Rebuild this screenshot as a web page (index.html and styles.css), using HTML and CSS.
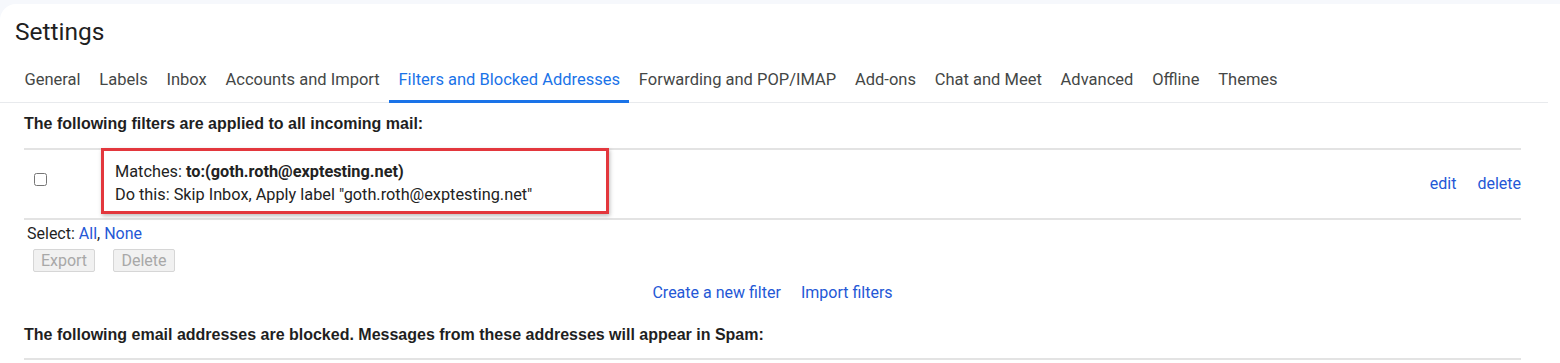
FILE: index.html
```html
<!DOCTYPE html>
<html lang="en">
<head>
  <title>Settings - Filters and Blocked Addresses</title>
  <link rel="stylesheet" href="styles.css">
</head>
<body>

  <div class="card">
    <h1 class="title">Settings</h1>

    <nav class="tabs">
      <a class="tab">General</a>
      <a class="tab">Labels</a>
      <a class="tab">Inbox</a>
      <a class="tab">Accounts and Import</a>
      <a class="tab active">Filters and Blocked Addresses</a>
      <a class="tab">Forwarding and POP/IMAP</a>
      <a class="tab">Add-ons</a>
      <a class="tab">Chat and Meet</a>
      <a class="tab">Advanced</a>
      <a class="tab">Offline</a>
      <a class="tab">Themes</a>
    </nav>

    <div class="content">
      <div class="section-head">The following filters are applied to all incoming mail:</div>

      <table class="filters">
        <tr>
          <td class="check-cell"><input type="checkbox"></td>
          <td class="desc-cell">
            <div class="desc">
              <div>Matches: <b>to:(goth.roth@exptesting.net)</b></div>
              <div>Do this: Skip Inbox, Apply label "goth.roth@exptesting.net"</div>
              <!-- highlight box from the screenshot -->
              <div class="highlight"></div>
            </div>
          </td>
          <td class="actions-cell">
            <a class="link">edit</a>
            <a class="link">delete</a>
          </td>
        </tr>
      </table>

      <div class="select">Select: <a class="link">All</a>, <a class="link">None</a></div>

      <div class="bulk">
        <button disabled>Export</button>
        <button disabled>Delete</button>
      </div>

      <div class="create">
        <a class="link">Create a new filter</a>
        <a class="link">Import filters</a>
      </div>

      <div class="section-head blocked">The following email addresses are blocked. Messages from these addresses will appear in Spam:</div>
      <div class="rule"></div>
    </div>
  </div>

</body>
</html>
```

FILE: styles.css
```css
:root {
  --bg: #f6f8fc;
  --text: #1f1f1f;
  --tab-text: #444746;
  --active: #1a73e8;
  --link: #2458d6;
  --line: #e3e3e3;
  --mark: #e3373d;
}

* {
  box-sizing: border-box;
}

body {
  margin: 0;
  background: var(--bg);
  font-family: Roboto, "Liberation Sans", sans-serif;
  color: var(--text);
  overflow: hidden;
}

.card {
  margin-top: 4px;
  width: 1576px;
  height: 359px;
  background: white;
  border-radius: 16px 16px 0 0;
  padding-top: 14px;
}

.title {
  margin: 0;
  padding-left: 15px;
  font-size: 24.5px;
  line-height: 28px;
  font-weight: 400;
}

.tabs {
  display: flex;
  margin-top: 11px;
  margin-right: 28px;
  padding-left: 15px;
  border-bottom: 1px solid #e8eaed;
}

.tab {
  padding: 13px 9.4px 10px;
  font-size: 16.5px;
  line-height: 20px;
  color: var(--tab-text);
  margin-bottom: -1px;
  border-bottom: 3px solid transparent;
}

.tab.active {
  color: var(--active);
  border-bottom-color: var(--active);
}

.content {
  margin: 0 55px 0 24px;
  font-size: 16px;
}

.section-head {
  margin-top: 11px;
  font-family: "Liberation Sans", Arial, sans-serif;
  font-weight: bold;
  font-size: 16px;
  line-height: 20px;
}

.filters {
  margin-top: 14px;
  width: 100%;
  border-collapse: collapse;
  border-top: 2px solid var(--line);
  border-bottom: 2px solid var(--line);
}

.filters td {
  padding: 10px 0 12px;
  vertical-align: middle;
}

.check-cell {
  width: 80px;
  padding-left: 10px !important;
}

.check-cell input {
  margin: 0;
  width: 13px;
  height: 13px;
  position: relative;
  top: -3px;
}

.desc {
  position: relative;
  display: inline-block;
  padding-left: 11px;
  font-size: 16.3px;
  line-height: 23px;
  color: #222;
}

.desc b {
  font-weight: 700;
}

.highlight {
  position: absolute;
  left: -3px;
  right: -77px;
  top: -12px;
  bottom: -8px;
  border: 3px solid var(--mark);
  box-shadow: 1px 2px 4px rgba(0, 0, 0, 0.25);
}

.actions-cell {
  text-align: right;
}

.actions-cell .link + .link {
  margin-left: 17px;
}

.link {
  color: var(--link);
  cursor: pointer;
}

.select {
  margin-top: 4px;
  padding-left: 3px;
  line-height: 20px;
}

.bulk {
  display: flex;
  gap: 18px;
  margin-top: 5px;
  padding-left: 9px;
}

.bulk button {
  width: 62px;
  height: 23px;
  padding: 0;
  font-family: Roboto, "Liberation Sans", sans-serif;
  font-size: 16px;
  color: #a8a8a8;
  background: #f1f1f1;
  border: 1px solid #d6d6d6;
  border-radius: 2px;
}

.create {
  display: flex;
  justify-content: center;
  gap: 20px;
  margin-top: 11px;
  line-height: 20px;
}

.section-head.blocked {
  margin-top: 22px;
}

.rule {
  margin-top: 13px;
  border-top: 2px solid var(--line);
}
```
